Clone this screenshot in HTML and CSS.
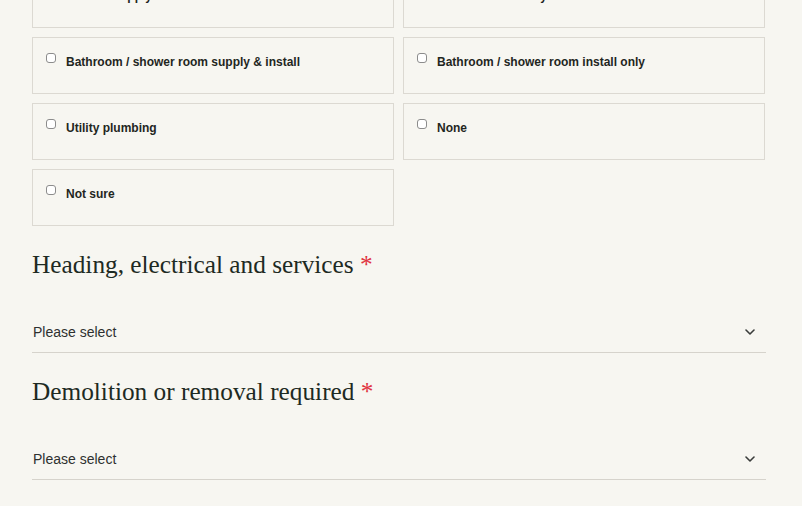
FILE: index.html
```html
<!DOCTYPE html>
<html lang="en">

<head>
  <meta charset="UTF-8">
  <meta name="viewport" content="width=device-width, initial-scale=1.0">
  <title>Project details</title>
  <link rel="stylesheet" href="styles.css">
</head>

<body>
  <div class="form">
    <div class="options">
      <label class="option"><input type="checkbox"><span>Kitchen supply &amp; install</span></label>
      <label class="option"><input type="checkbox"><span>Kitchen install only</span></label>
      <label class="option"><input type="checkbox"><span>Bathroom / shower room supply &amp; install</span></label>
      <label class="option"><input type="checkbox"><span>Bathroom / shower room install only</span></label>
      <label class="option"><input type="checkbox"><span>Utility plumbing</span></label>
      <label class="option"><input type="checkbox"><span>None</span></label>
      <label class="option"><input type="checkbox"><span>Not sure</span></label>
    </div>

    <div class="field">
      <h2 class="field-title">Heading, electrical and services <span class="req">*</span></h2>
      <div class="select">
        <span>Please select</span>
        <svg class="chevron" width="10" height="6" viewBox="0 0 10 6">
          <path d="M1 1l4 4 4-4" fill="none" stroke="#3a3d3b" stroke-width="1.6" stroke-linecap="round" stroke-linejoin="round"/>
        </svg>
      </div>
    </div>

    <div class="field field-next">
      <h2 class="field-title">Demolition or removal required <span class="req">*</span></h2>
      <div class="select">
        <span>Please select</span>
        <svg class="chevron" width="10" height="6" viewBox="0 0 10 6">
          <path d="M1 1l4 4 4-4" fill="none" stroke="#3a3d3b" stroke-width="1.6" stroke-linecap="round" stroke-linejoin="round"/>
        </svg>
      </div>
    </div>
  </div>
</body>

</html>
```

FILE: styles.css
```css
* {
  margin: 0;
  padding: 0;
  box-sizing: border-box;
}

html {
  background-color: #f7f6f1;
}

body {
  font-family: "Liberation Sans", Arial, sans-serif;
  color: #1f2622;
}

.form {
  width: 734px;
  margin: -29px 0 0 32px;
}

.options {
  display: grid;
  grid-template-columns: 362px 362px;
  column-gap: 9px;
  row-gap: 9px;
}

.option {
  display: flex;
  align-items: flex-start;
  height: 57px;
  padding: 14px 13px 0;
  border: 1px solid #dcd9d2;
  font-size: 12px;
  font-weight: bold;
  line-height: 14px;
  cursor: pointer;
}

.option input {
  appearance: none;
  -webkit-appearance: none;
  flex: none;
  width: 10px;
  height: 10px;
  margin: 1px 10px 0 0;
  border: 1px solid #8c8c8c;
  border-radius: 3px;
  background-color: #fff;
}

.option span {
  padding-top: 3px;
}

.field {
  margin-top: 24px;
}

.field-next {
  margin-top: 24px;
}

.field-title {
  font-family: "Liberation Serif", Georgia, serif;
  font-size: 25.3px;
  font-weight: normal;
  line-height: 29px;
  color: #1e2a23;
  margin-bottom: 33px;
}

.req {
  color: #e0323f;
}

.select {
  display: flex;
  align-items: center;
  justify-content: space-between;
  padding: 10px 11px 10px 1px;
  line-height: 20px;
  font-size: 14px;
  color: #2e302f;
  border-bottom: 1px solid #d6d3cc;
}

.chevron {
  display: block;
}
```
